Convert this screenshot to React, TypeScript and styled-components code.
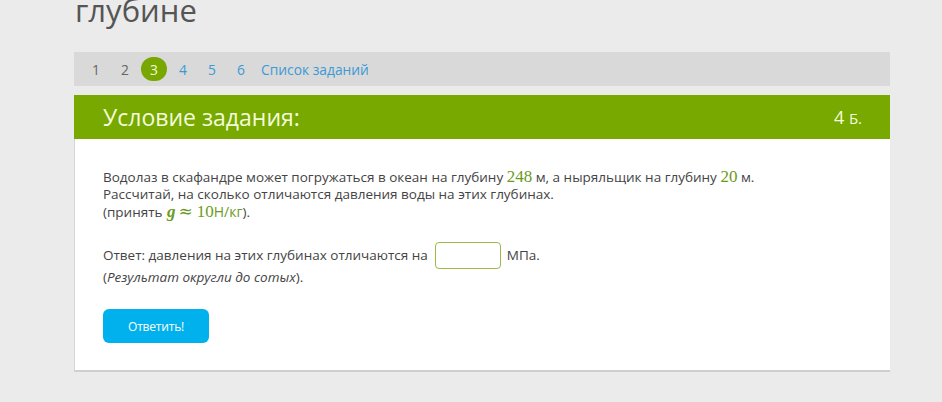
import React from 'react'
import styled, { createGlobalStyle } from 'styled-components'

const GlobalStyle = createGlobalStyle`
  html, body {
    margin: 0;
    padding: 0;
    background: #ebebeb;
    overflow: hidden;
  }
  body {
    font-family: 'Open Sans', 'Liberation Sans', sans-serif;
  }
`

export const Page = styled.div`
  width: 942px;
  height: 402px;
  padding-left: 74px;
  box-sizing: border-box;
  background: #ebebeb;
`

export const Title = styled.h1`
  margin: -6px 0 0 1px;
  font-size: 31px;
  line-height: 32px;
  font-weight: 400;
  color: #555;
`

export const Wrapper = styled.div`
  width: 816px;
  margin-top: 26px;
  display: flex;
  flex-direction: column;
`

export const NavBar = styled.div`
  height: 34px;
  background: #d9d9d9;
  display: flex;
  flex-direction: row;
  align-items: center;
  gap: 5px;
  padding-left: 10px;
`

export const NavItem = styled.a<{ $kind: 'done' | 'current' | 'link' }>`
  min-width: 24px;
  height: 24px;
  padding: 0 3px;
  box-sizing: border-box;
  display: flex;
  align-items: center;
  justify-content: center;
  border-radius: 12px;
  font-size: 13.8px;
  cursor: pointer;
  color: ${(p) => (p.$kind === 'done' ? '#666' : p.$kind === 'current' ? '#f2fbd2' : '#3b9ad6')};
  background: ${(p) => (p.$kind === 'current' ? '#77a700' : 'transparent')};
  ${(p) => (p.$kind === 'current' ? 'width: 26px; min-width: 26px; margin: 0 -1px;' : '')}
`

export const Header = styled.div`
  margin-top: 9px;
  height: 44px;
  background: #77a900;
  display: flex;
  flex-direction: row;
  align-items: center;
  justify-content: space-between;
  padding: 0 28px 0 29px;
  color: #f4fcdc;
`

export const HeaderTitle = styled.div`
  font-size: 23px;
`

export const Points = styled.div`
  font-size: 18px;
  span {
    font-size: 15px;
  }
`

export const Body = styled.div`
  background: #fff;
  border-left: 1px solid #d6d6d6;
  border-bottom: 2px solid #cfcfcf;
  padding: 29px 28px 27px 28px;
  color: #444;
  font-size: 13.5px;
  line-height: 17px;
`

export const Question = styled.p`
  margin: 0;
`

export const Num = styled.span`
  font-family: 'Liberation Serif', serif;
  font-size: 17px;
  color: #6a9b22;
  line-height: 17px;
`

export const MathVar = styled(Num)`
  font-style: italic;
  font-weight: 700;
  font-size: 17px;
  padding: 0 3px 0 1px;
`

export const Approx = styled.span`
  font-family: 'DejaVu Serif', serif;
  font-size: 17px;
  line-height: 17px;
  color: #6a9b22;
  padding-right: 4px;
`

export const MathText = styled.span`
  color: #6a9b22;
  font-size: 14px;
`

export const AnswerRow = styled.div`
  margin-top: 21px;
  display: flex;
  flex-direction: row;
  align-items: center;
  gap: 6px;
  height: 27px;
`

export const AnswerInput = styled.input`
  width: 66px;
  height: 27px;
  box-sizing: border-box;
  border: 1px solid #9fb84a;
  border-radius: 4px;
  background: #fff;
  outline: none;
  margin-left: 1px;
`

export const Hint = styled.div`
  em {
    font-style: italic;
  }
`

export const SubmitButton = styled.button`
  margin-top: 23px;
  width: 106px;
  height: 34px;
  border: none;
  border-radius: 6px;
  background: #00b1ee;
  color: #fff;
  font-family: 'Open Sans', 'Liberation Sans', sans-serif;
  font-size: 12px;
  letter-spacing: -0.2px;
  cursor: pointer;
  display: block;
`

const tasks: { label: string; kind: 'done' | 'current' | 'link' }[] = [
  { label: '1', kind: 'done' },
  { label: '2', kind: 'done' },
  { label: '3', kind: 'current' },
  { label: '4', kind: 'link' },
  { label: '5', kind: 'link' },
  { label: '6', kind: 'link' },
  { label: 'Список заданий', kind: 'link' },
]

export default function App() {
  return (
    <Page>
      <GlobalStyle />
      <Title>глубине</Title>
      <Wrapper>
        <NavBar>
          {tasks.map((t) => (
            <NavItem key={t.label} $kind={t.kind}>
              {t.label}
            </NavItem>
          ))}
        </NavBar>
        <Header>
          <HeaderTitle>Условие задания:</HeaderTitle>
          <Points>
            4 <span>Б.</span>
          </Points>
        </Header>
        <Body>
          <Question>
            <div>
              Водолаз в скафандре может погружаться в океан на глубину <Num>248</Num> м, а ныряльщик на глубину{' '}
              <Num>20</Num> м.
            </div>
            <div>Рассчитай, на сколько отличаются давления воды на этих глубинах.</div>
            <div>
              (принять <MathVar>g</MathVar>
              <Approx>≈</Approx>
              <Num>10</Num>
              <MathText>Н/кг</MathText>).
            </div>
          </Question>
          <AnswerRow>
            <span>Ответ: давления на этих глубинах отличаются на</span>
            <AnswerInput type="text" />
            <span>МПа.</span>
          </AnswerRow>
          <Hint>
            (<em>Результат округли до сотых</em>).
          </Hint>
          <SubmitButton>Ответить!</SubmitButton>
        </Body>
      </Wrapper>
    </Page>
  )
}
